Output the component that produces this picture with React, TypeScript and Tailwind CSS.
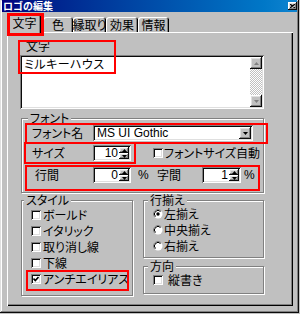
import React from 'react';

const sunken =
  'shadow-[inset_1px_1px_#808080,inset_-1px_-1px_#ffffff,inset_2px_2px_#0a0a0a,inset_-2px_-2px_#dfdfdf]';
const raised =
  'shadow-[inset_-1px_-1px_#0a0a0a,inset_1px_1px_#ffffff,inset_-2px_-2px_#808080,inset_2px_2px_#dfdfdf]';
const etched = 'border border-[#808080] shadow-[inset_1px_1px_#ffffff,1px_1px_#ffffff]';
const legend = 'absolute top-[-6px] px-[2px] bg-[#c0c0c0] leading-[10px]';

const Arrow = ({ up, color = '#000' }: { up?: boolean; color?: string }) => (
  <svg width="5" height="3" viewBox="0 0 5 3">
    <path d={up ? 'M2.5 0 L5 3 L0 3 Z' : 'M0 0 L5 0 L2.5 3 Z'} fill={color} />
  </svg>
);

const Check = ({ checked }: { checked?: boolean }) => (
  <span className={`w-[10px] h-[10px] shrink-0 bg-white flex items-center justify-center ${sunken}`}>
    {checked && (
      <svg width="6" height="6" viewBox="0 0 6 6">
        <path d="M0.5 2.5 L2.3 4.5 L5.5 1" stroke="#000" strokeWidth="1.6" fill="none" />
      </svg>
    )}
  </span>
);

const Radio = ({ checked }: { checked?: boolean }) => (
  <svg width="10" height="10" viewBox="0 0 10 10" className="shrink-0">
    <circle cx="5" cy="5" r="4.5" fill="#fff" />
    <path d="M8.2 1.8 A4.5 4.5 0 0 0 1.8 8.2" stroke="#808080" fill="none" />
    <path d="M7.5 2.5 A3.5 3.5 0 0 0 2.5 7.5" stroke="#000" fill="none" />
    {checked && <circle cx="5" cy="5" r="1.7" fill="#000" />}
  </svg>
);

const Spin = ({ value, w }: { value: string; w: string }) => (
  <div className={`${w} h-[16px] bg-white flex p-[2px] ${sunken}`}>
    <div className="flex-1 text-right pr-[1px] leading-[12px] font-['Liberation_Sans',sans-serif] text-[12px]">{value}</div>
    <div className="w-[10px] flex flex-col">
      <div className={`h-[6px] bg-[#c0c0c0] flex items-center justify-center ${raised}`}>
        <Arrow up />
      </div>
      <div className={`h-[6px] bg-[#c0c0c0] flex items-center justify-center ${raised}`}>
        <Arrow />
      </div>
    </div>
  </div>
);

const tabs = [
  { label: '色', w: 'w-[30px]' },
  { label: '縁取り', w: 'w-[33px]' },
  { label: '効果', w: 'w-[32px]' },
  { label: '情報', w: 'w-[31px]' },
];

const styles = ['ボールド', 'イタリック', '取り消し線', '下線', 'アンチエイリアス'];
const aligns = ['左揃え', '中央揃え', '右揃え'];

export default function App() {
  return (
    <div className="w-[300px] h-[314px] bg-[#c0c0c0] overflow-hidden text-black text-[12px] leading-[12px] font-['Noto_Sans_CJK_JP',sans-serif] [font-feature-settings:'palt']">
      <div className="relative w-[299px] h-[313px] shadow-[inset_-1px_-1px_#0a0a0a,inset_1px_1px_#dfdfdf,inset_-2px_-2px_#808080,inset_2px_2px_#ffffff]">
        {/* title bar */}
        <div className="mx-[2px] h-[12px] bg-gradient-to-r from-[#000080] to-[#1084d0] flex items-center justify-between">
          <span className="pl-[1px] text-white font-bold text-[10px] leading-[10px] [font-feature-settings:normal]">ロゴの編集</span>
          <span className={`w-[9px] h-[8px] bg-[#c0c0c0] flex items-center justify-center ${raised}`}>
            <svg width="5" height="4" viewBox="0 0 5 4">
              <path d="M0 0 L5 4 M5 0 L0 4" stroke="#000" strokeWidth="1.2" />
            </svg>
          </span>
        </div>

        {/* tabs */}
        <div className="mt-[2px] ml-[8px] h-[18px] flex items-end">
          <div className="relative z-10 w-[33px] h-[19px] -mb-[1px] bg-[#c0c0c0] rounded-t-[3px] shadow-[inset_1px_1px_#ffffff,inset_-1px_0_#000000,inset_-2px_0_#808080] flex items-center justify-center pb-[1px]">
            文字
          </div>
          {tabs.map((t, i) => (
            <div
              key={t.label}
              className={`${t.w} ${i === 0 ? 'ml-[2px]' : ''} h-[15px] rounded-t-[3px] shadow-[inset_1px_1px_#ffffff,inset_-1px_0_#000000,inset_-2px_0_#808080] flex items-center justify-center whitespace-nowrap`}
            >
              {t.label}
            </div>
          ))}
        </div>

        {/* panel */}
        <div className="ml-[7px] w-[286px] h-[274px] pt-[8px] shadow-[inset_1px_1px_#ffffff,inset_-1px_-1px_#000000,inset_-2px_-2px_#808080]">
          <div className="ml-[19px] h-[12px]">文字</div>
          <div className={`ml-[13px] mt-[3px] w-[244px] h-[54px] bg-white flex p-[2px] ${sunken}`}>
            <div className="flex-1 pl-[2px] pt-[1px] tracking-[0.5px]">ミルキーハウス</div>
            <div className="w-[12px] flex flex-col">
              <div className={`h-[12px] bg-[#c0c0c0] flex items-center justify-center ${raised}`}>
                <Arrow up color="#808080" />
              </div>
              <div className="flex-1 [background-image:repeating-conic-gradient(#ffffff_0_25%,#c0c0c0_0_50%)] [background-size:2px_2px]" />
              <div className={`h-[12px] bg-[#c0c0c0] flex items-center justify-center ${raised}`}>
                <Arrow color="#808080" />
              </div>
            </div>
          </div>

          {/* font group */}
          <div className={`relative mt-[9px] ml-[14px] w-[243px] h-[75px] pt-[6px] ${etched}`}>
            <span className={`${legend} left-[6px]`}>フォント</span>
            <div className="flex items-center h-[16px] pl-[10px]">
              <span className="w-[61px]">フォント名</span>
              <div className={`w-[160px] h-[16px] bg-white flex items-center p-[2px] ${sunken}`}>
                <span className="flex-1 pl-[2px] font-['Liberation_Sans',sans-serif] text-[12px]">MS UI Gothic</span>
                <span className={`w-[12px] h-[12px] bg-[#c0c0c0] flex items-center justify-center ${raised}`}>
                  <Arrow />
                </span>
              </div>
            </div>
            <div className="flex items-center h-[16px] pl-[10px] mt-[4px]">
              <span className="w-[61px]">サイズ</span>
              <Spin value="10" w="w-[38px]" />
              <span className="ml-[22px]">
                <Check />
              </span>
              <span className="ml-[1px]">フォントサイズ自動</span>
            </div>
            <div className="flex items-center h-[16px] pl-[10px] mt-[6px]">
              <span className="w-[61px] pl-[3px]">行間</span>
              <Spin value="0" w="w-[38px]" />
              <span className="w-[26px] pl-[7px] font-['Liberation_Sans',sans-serif]">%</span>
              <span className="w-[45px]">字間</span>
              <Spin value="1" w="w-[39px]" />
              <span className="ml-[3px] font-['Liberation_Sans',sans-serif]">%</span>
            </div>
          </div>

          {/* bottom groups */}
          <div className="mt-[7px] ml-[14px] flex gap-[10px]">
            <div className={`relative w-[112px] h-[96px] pt-[6px] pl-[9px] ${etched}`}>
              <span className={`${legend} left-[2px]`}>スタイル</span>
              {styles.map((s, i) => (
                <div key={s} className="flex items-center h-[16px]">
                  <Check checked={i === 4} />
                  <span className="ml-[2px] whitespace-nowrap">{s}</span>
                </div>
              ))}
            </div>
            <div className="flex flex-col">
              <div className={`relative w-[121px] h-[58px] pt-[5px] pl-[9px] ${etched}`}>
                <span className={`${legend} left-[4px]`}>行揃え</span>
                {aligns.map((a, i) => (
                  <div key={a} className="flex items-center h-[16px]">
                    <Radio checked={i === 0} />
                    <span className="ml-[1px]">{a}</span>
                  </div>
                ))}
              </div>
              <div className={`relative mt-[8px] w-[121px] h-[28px] pt-[8px] pl-[9px] ${etched}`}>
                <span className={`${legend} left-[4px]`}>方向</span>
                <div className="flex items-center h-[10px]">
                  <Check />
                  <span className="ml-[5px]">縦書き</span>
                </div>
              </div>
            </div>
          </div>
        </div>

        {/* red annotation boxes */}
        <div className="absolute left-[7px] top-[13px] w-[37px] h-[23px] border-[3px] border-[#ff0000] z-20" />
        <div className="absolute left-[18px] top-[40px] w-[98px] h-[34px] border-2 border-[#ff0000] z-20" />
        <div className="absolute left-[25px] top-[123px] w-[243px] h-[21px] border-2 border-[#ff0000] z-20" />
        <div className="absolute left-[24px] top-[142px] w-[112px] h-[22px] border-2 border-[#ff0000] z-20" />
        <div className="absolute left-[25px] top-[165px] w-[235px] h-[26px] border-2 border-[#ff0000] z-20" />
        <div className="absolute left-[26px] top-[270px] w-[103px] h-[21px] border-2 border-[#ff0000] z-20" />
      </div>
    </div>
  );
}
